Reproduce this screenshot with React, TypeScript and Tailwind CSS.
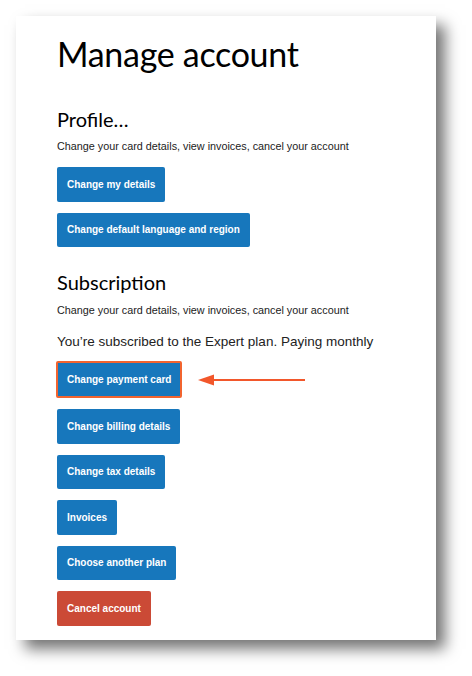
import React from "react";

const heading = { fontFamily: "Lato, 'Noto Sans', sans-serif" };

function Btn({ children, red = false }: { children: React.ReactNode; red?: boolean }) {
  return (
    <div
      className={`inline-flex h-[34.5px] items-center rounded-[2px] px-[10px] text-[10px] font-bold text-white ${
        red ? "bg-[#cb4a36]" : "bg-[#1777bc]"
      }`}
    >
      {children}
    </div>
  );
}

export default function App() {
  return (
    <div className="h-[676px] w-[472px] bg-white p-[16px]" style={{ fontFamily: "'Liberation Sans', Arial, sans-serif" }}>
      <div className="h-[624px] w-[420px] bg-white pl-[41px] pt-[18px] text-[#111] shadow-[9px_9px_14px_rgba(0,0,0,0.55)]">
        <h1 className="text-[34px] leading-[40px] tracking-[-0.3px] text-black" style={heading}>
          Manage account
        </h1>
        <h2 className="mt-[33px] text-[20px] leading-[24px] text-black" style={heading}>
          Profile…
        </h2>
        <p className="mt-[8px] text-[10.8px] leading-[14px] text-[#222]">
          Change your card details, view invoices, cancel your account
        </p>
        <div className="mt-[14px] flex flex-col items-start gap-[11px]">
          <Btn>Change my details</Btn>
          <Btn>Change default language and region</Btn>
        </div>
        <h2 className="mt-[23px] text-[20px] leading-[24px] text-black" style={heading}>
          Subscription
        </h2>
        <p className="mt-[9px] text-[10.8px] leading-[14px] text-[#222]">
          Change your card details, view invoices, cancel your account
        </p>
        <p className="mt-[16px] text-[13.5px] leading-[17px] text-[#222]">
          You’re subscribed to the Expert plan. Paying monthly
        </p>
        <div className="mt-[11px] flex flex-col items-start gap-[11px]">
          <div className="flex items-center">
            <div className="-ml-[1px] rounded-[2px] border-2 border-[#f2642f]">
              <div className="flex h-[33px] items-center bg-[#1777bc] px-[9px] text-[10px] font-bold text-white">
                Change payment card
              </div>
            </div>
            <svg width="108" height="14" viewBox="0 0 108 14" className="ml-[16px] mt-[1px]">
              <line x1="10" y1="7" x2="107" y2="7" stroke="#f2572b" strokeWidth="2.2" />
              <polygon points="0,7 16,1.5 16,12.5" fill="#f2572b" />
            </svg>
          </div>
          <Btn>Change billing details</Btn>
          <Btn>Change tax details</Btn>
          <Btn>Invoices</Btn>
          <Btn>Choose another plan</Btn>
          <Btn red>Cancel account</Btn>
        </div>
      </div>
    </div>
  );
}
